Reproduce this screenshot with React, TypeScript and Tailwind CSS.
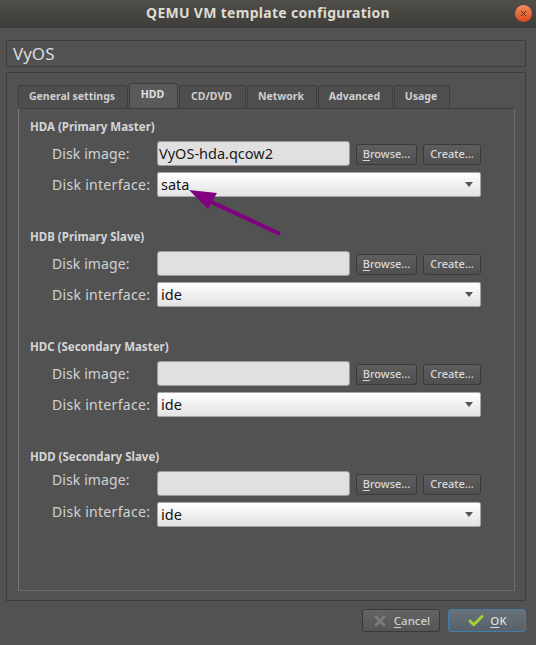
import { Check, X } from "lucide-react";

const tabs = [
  { name: "General settings", width: "w-[110px]" },
  { name: "HDD", width: "w-[49px]", active: true },
  { name: "CD/DVD", width: "w-[67px]" },
  { name: "Network", width: "w-[70px]" },
  { name: "Advanced", width: "w-[75px]" },
  { name: "Usage", width: "w-[56px]" },
];

const disks = [
  { title: "HDA (Primary Master)", image: "VyOS-hda.qcow2", iface: "sata" },
  { title: "HDB (Primary Slave)", image: "", iface: "ide" },
  { title: "HDC (Secondary Master)", image: "", iface: "ide" },
  { title: "HDD (Secondary Slave)", image: "", iface: "ide", raised: true },
];

function SmallButton({ children }: { children: React.ReactNode }) {
  return (
    <button className="h-[21px] rounded-[3px] border border-[#3a3a3a] bg-gradient-to-b from-[#5e5e5e] to-[#4f4f4f] text-[11px] font-medium text-[#d8d8d8]">
      {children}
    </button>
  );
}

function DiskGroup({ title, image, iface, raised }: { title: string; image: string; iface: string; raised?: boolean }) {
  return (
    <section className="h-[110px]">
      <h2 className="h-[17px] text-[11.5px] leading-[17px] font-bold text-[#d5d5d5]">{title}</h2>
      <div className="mt-[6px] ml-[22px] flex items-center">
        <label className={`w-[105px] text-[14px] tracking-[0.1px] text-[#d2d2d2] ${raised ? "-translate-y-[4px]" : ""}`}>Disk image:</label>
        <div className="h-[25px] w-[193px] rounded-[3px] border border-[#9c9c9c] bg-[#e0e0e0] pl-[1px] text-[14.5px] leading-[23px] text-[#1a1a1a]">
          {image}
        </div>
        <div className="mt-[2px] ml-[6px] grid grid-cols-[61px_58px] gap-[6px]">
          <SmallButton>
            <span className="underline underline-offset-2">B</span>rowse...
          </SmallButton>
          <SmallButton>Create...</SmallButton>
        </div>
      </div>
      <div className="mt-[6px] ml-[22px] flex items-center">
        <label className={`w-[105px] text-[14px] tracking-[0.3px] text-[#d2d2d2] ${raised ? "-translate-y-[3px]" : ""}`}>Disk interface:</label>
        <div className="flex h-[25px] w-[324px] items-center justify-between rounded-[2px] border border-[#a5a5a5] bg-gradient-to-b from-white to-[#e2e2e2] pr-[7px] pl-[3px] text-[14.5px] text-[#111111]">
          <span>{iface}</span>
          <span className="h-0 w-0 border-x-[4px] border-t-[5px] border-x-transparent border-t-[#555555]" />
        </div>
      </div>
    </section>
  );
}

export default function App() {
  return (
    <div className="relative flex h-[645px] w-[536px] flex-col overflow-hidden bg-[#525252] font-['Noto_Sans',sans-serif]">
      <header className="relative flex h-[28px] shrink-0 items-center justify-center bg-gradient-to-b from-[#504e49] to-[#3e3d39] pb-[3px]">
        <h1 className="text-[14px] font-bold tracking-[0.3px] text-[#dfdbd2]">QEMU VM template configuration</h1>
        <div className="absolute top-[5px] right-[4px] flex h-[17px] w-[17px] items-center justify-center rounded-full bg-gradient-to-b from-[#f08a5d] to-[#d9491a]">
          <X size={9} strokeWidth={2.5} className="text-[#4a2a1a]" />
        </div>
      </header>

      <div className="mt-[12px] ml-[6px] h-[27px] w-[520px] border border-[#3d3d3d] pl-[6px] text-[17px] leading-[25px] text-[#dcdcdc]">VyOS</div>

      <div className="mt-[5px] ml-[6px] h-[529px] w-[520px] border border-[#3d3d3d] pt-[11px] pr-[10px] pl-[11px]">
        <nav className="relative z-10 flex h-[24px] items-end gap-[1px]">
          {tabs.map((tab) => (
            <div
              key={tab.name}
              className={`flex items-center justify-center rounded-t-[3px] border border-b-0 border-[#3f3f3f] pr-[2px] text-[10.5px] font-bold ${tab.width} ${
                tab.active ? "h-[25px] bg-[#5a5a5a] pb-[3px] text-[#e0e0e0]" : "h-[23px] bg-[#4e4e4e] text-[#cfcfcf]"
              }`}
            >
              {tab.name}
            </div>
          ))}
        </nav>
        <main className="h-[483px] border border-[#6e6e6e] border-t-[#3f3f3f] border-l-[#777777] bg-[#525252] pt-[9px] pl-[11px]">
          {disks.map((disk) => (
            <DiskGroup key={disk.title} {...disk} />
          ))}
        </main>
      </div>

      <footer className="mt-[8px] mr-[10px] flex justify-end gap-[8px]">
        <button className="flex h-[23px] w-[78px] items-center justify-center gap-[6px] rounded-[3px] border border-[#3a3a3a] bg-gradient-to-b from-[#646464] to-[#555555] text-[11.5px] font-medium text-[#cfcfcf]">
          <X size={16} strokeWidth={4} className="text-[#7b7b7b]" />
          <span>
            <span className="underline underline-offset-2">C</span>ancel
          </span>
        </button>
        <button className="flex h-[23px] w-[78px] items-center justify-center gap-[5px] rounded-[3px] border border-[#3f7fa8] bg-gradient-to-b from-[#6a7278] to-[#58616a] text-[11.5px] font-medium text-[#dddddd]">
          <Check size={18} strokeWidth={4} className="text-[#a4d03a]" />
          <span>
            <span className="underline underline-offset-2">O</span>K
          </span>
        </button>
      </footer>

      <svg className="absolute top-0 left-0" width="536" height="645" viewBox="0 0 536 645">
        <line x1="280" y1="234" x2="205" y2="199" stroke="#800080" strokeWidth="4" />
        <polygon points="189,190 217,193 208,209" fill="#800080" />
      </svg>
    </div>
  );
}
